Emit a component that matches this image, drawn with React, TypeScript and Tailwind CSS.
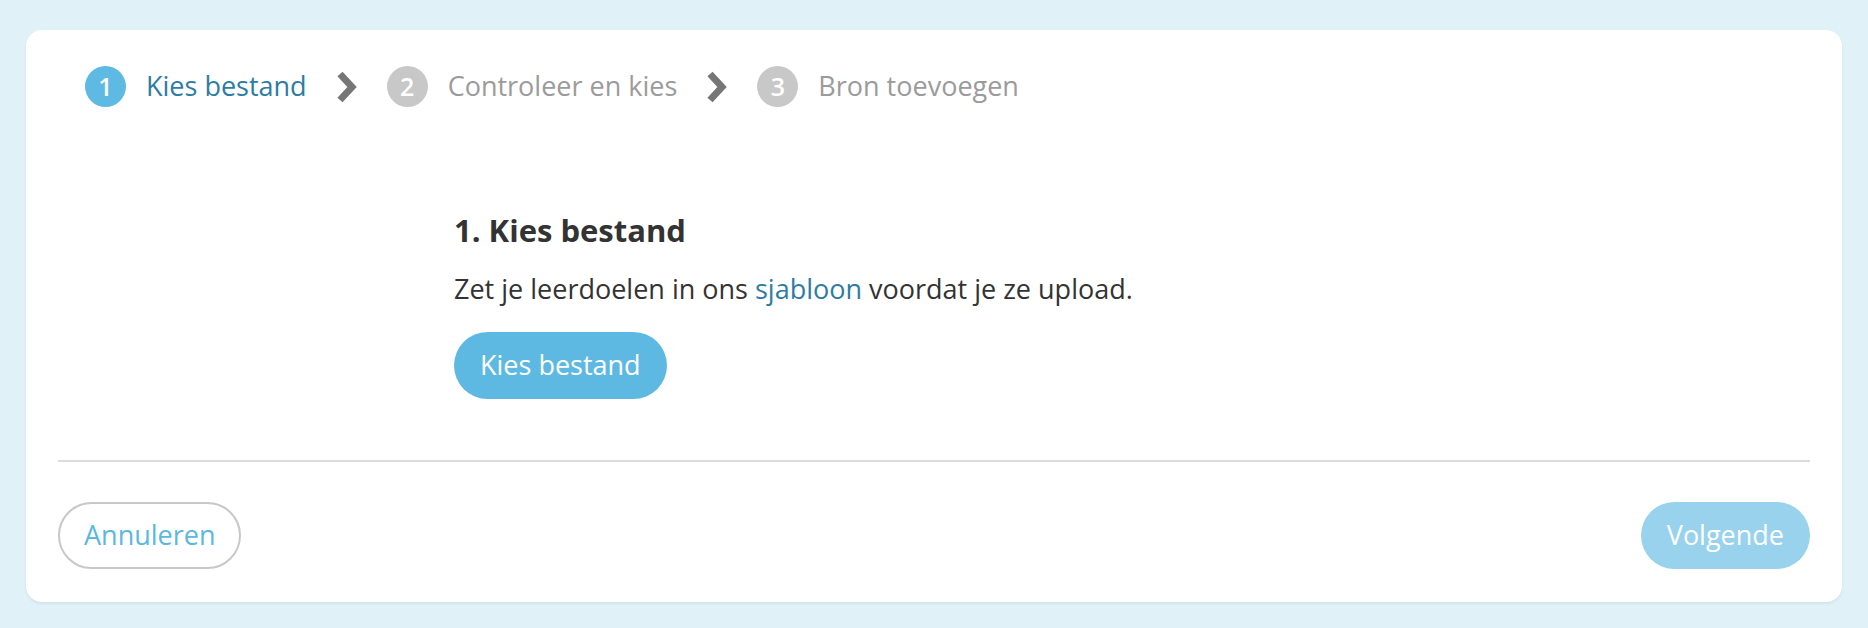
import React from "react";

const font = { fontFamily: '"Open Sans", "Noto Sans", sans-serif' };

function Chevron() {
  return (
    <svg width="22" height="34" viewBox="0 0 22 34" className="shrink-0">
      <polyline points="4,4 16,17 4,30" fill="none" stroke="#767676" strokeWidth="7" strokeLinejoin="miter" strokeLinecap="butt" />
    </svg>
  );
}

function Step({ n, label, active }: { n: number; label: string; active?: boolean }) {
  return (
    <div className="flex items-center gap-[20px]">
      <span
        className={
          "flex h-[41px] w-[41px] items-center justify-center rounded-full text-[25px] font-semibold text-white " +
          (active ? "bg-[#5ebae2]" : "bg-[#c8c8c8]")
        }
      >
        {n}
      </span>
      <span className={"text-[27px] " + (active ? "text-[#2e7ca3]" : "text-[#9b9b9b]")}>{label}</span>
    </div>
  );
}

export default function App() {
  return (
    <div className="min-h-screen bg-[#e0f1f8] px-[26px] pt-[30px] pb-[26px]" style={font}>
      <div className="flex h-[572px] flex-col rounded-[16px] bg-white px-[32px] pt-[36px] pb-[33px] shadow-[0_2px_3px_rgba(0,0,0,0.06)]">
        {/* Stepper */}
        <div className="ml-[27px] flex items-center">
          <Step n={1} label="Kies bestand" active />
          <div className="mx-[29px]">
            <Chevron />
          </div>
          <Step n={2} label="Controleer en kies" />
          <div className="mx-[29px]">
            <Chevron />
          </div>
          <Step n={3} label="Bron toevoegen" />
        </div>

        {/* Body */}
        <div className="mx-auto mt-[103px] w-[960px]">
          <h2 className="text-[31px] font-bold leading-[40px] text-[#333333]">1. Kies bestand</h2>
          <p className="mt-[20px] text-[27px] leading-[38px] text-[#333333]">
            Zet je leerdoelen in ons <a className="text-[#2e7ca3]">sjabloon</a> voordat je ze upload.
          </p>
          <button className="mt-[24px] h-[67px] rounded-full bg-[#5eb9e2] px-[26px] text-[27px] text-white">
            Kies bestand
          </button>
        </div>

        <div className="mt-auto">
          <div className="h-[2px] bg-[#dcdcdc]" />
          <div className="mt-[40px] flex items-center justify-between">
            <button className="h-[67px] rounded-full border-2 border-[#c8c8c8] bg-white px-[24px] text-[27px] text-[#5bb8e0]">
              Annuleren
            </button>
            <button className="h-[67px] rounded-full bg-[#98d2ec] px-[26px] text-[27px] text-white">
              Volgende
            </button>
          </div>
        </div>
      </div>
    </div>
  );
}
